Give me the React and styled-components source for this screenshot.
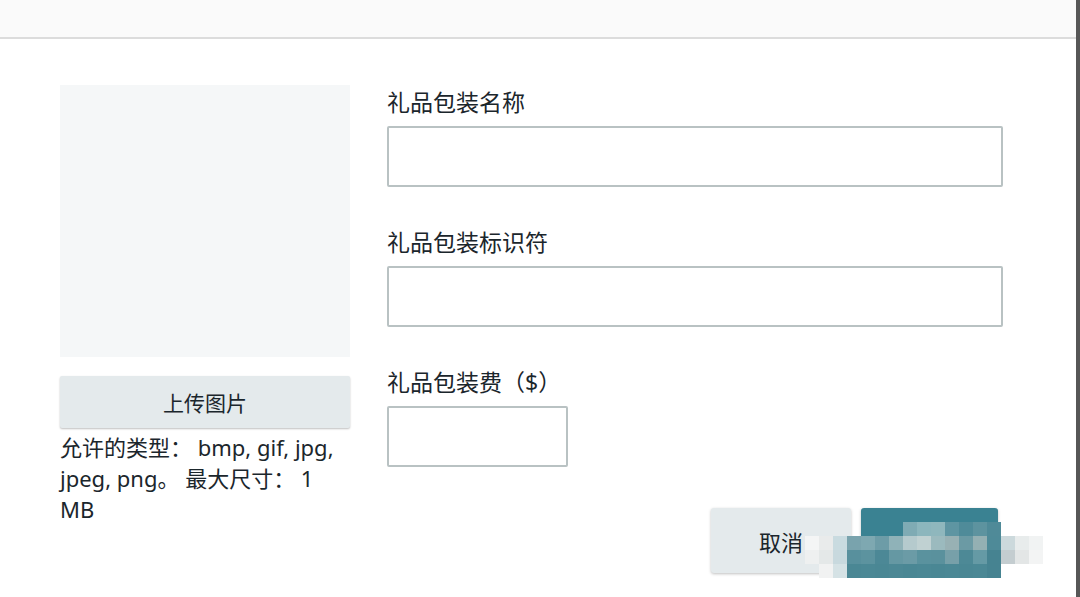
import React from "react";
import styled, { createGlobalStyle } from "styled-components";

const GlobalStyle = createGlobalStyle`
  html, body {
    margin: 0;
    padding: 0;
    background: #ffffff;
  }
  body {
    font-family: "Noto Sans", "Noto Sans CJK SC", sans-serif;
    color: #1b262c;
  }
`;

const mosaic = [
  { row: 0, cells: ["", "", "", "", "", "", "", "#7fabb4", "#8cb6bd", "#8fb7bd", "#5e95a2", "#4f8b99", "#5d939f", "#4f8a98", "", "", ""] },
  { row: 1, cells: ["#f4f5f5", "#e9ebeb", "#c9dbe0", "#79a3ad", "#7ea8b1", "#6d9ca7", "#8fb2b8", "#b5cacd", "#c0d1d2", "#9bbabe", "#98b1b4", "#6b9aa4", "#94b0b3", "#4e8a98", "#ccd9dc", "#e8ecec", "#f1f3f3"] },
  { row: 2, cells: ["#eef0f0", "#e4e8e8", "#c8d9de", "#58909d", "#5c939f", "#4c8896", "#6598a3", "#6b9ba6", "#5a929e", "#5a919d", "#77a0a9", "#4d8996", "#659aa5", "#468391", "#c4cdd0", "#e3e6e6", "#f3f4f4"] },
  { row: 3, cells: ["", "#f1f2f2", "#d5e2e5", "#4a8794", "#4b8895", "#4a8794", "#4c8895", "#4a8794", "#4b8895", "#4a8794", "#4b8895", "#4a8794", "#4b8895", "#468391", "", "", ""] },
];

function App() {
  return (
    <Page>
      <GlobalStyle />
      <Main>
        <Header />
        <Body>
          <ImageColumn>
            <ImagePlaceholder />
            <UploadButton type="button">上传图片</UploadButton>
            <HelpText>允许的类型： bmp, gif, jpg, jpeg, png。 最大尺寸： 1 MB</HelpText>
          </ImageColumn>

          <FormColumn>
            <Field>
              <Label>礼品包装名称</Label>
              <TextInput />
            </Field>
            <Field>
              <Label>礼品包装标识符</Label>
              <TextInput />
            </Field>
            <Field>
              <Label>礼品包装费（$）</Label>
              <TextInput $width="181px" />
            </Field>

            <Actions>
              <ActionButton type="button">取消</ActionButton>
              <ActionButton type="button" $primary>
                保存
              </ActionButton>
              <Mosaic>
                {mosaic.map((r) => (
                  <MosaicRow key={r.row}>
                    {r.cells.map((c, i) => (
                      <MosaicCell key={i} style={{ background: c || "transparent" }} />
                    ))}
                  </MosaicRow>
                ))}
              </Mosaic>
            </Actions>
          </FormColumn>
        </Body>
      </Main>
      <Edge />
    </Page>
  );
}

const Page = styled.div`
  display: flex;
  width: 1080px;
  height: 597px;
  overflow: hidden;
`;

const Main = styled.div`
  flex: 1;
  display: flex;
  flex-direction: column;
`;

const Edge = styled.div`
  width: 4px;
  background: #575757;
`;

const Header = styled.div`
  height: 37px;
  background: #fafafa;
  border-bottom: 2px solid #dcdcdc;
`;

const Body = styled.div`
  display: grid;
  grid-template-columns: 290px 616px;
  column-gap: 37px;
  padding: 46px 0 0 60px;
`;

const ImageColumn = styled.div`
  display: flex;
  flex-direction: column;
`;

const ImagePlaceholder = styled.div`
  height: 272px;
  background: #f5f7f8;
`;

const UploadButton = styled.button`
  margin-top: 19px;
  height: 52px;
  border: none;
  border-radius: 2px;
  background: #e4eaec;
  box-shadow: 0 1px 2px rgba(0, 0, 0, 0.25);
  font-family: "Noto Sans", "Noto Sans CJK SC", sans-serif;
  font-size: 21px;
  color: #1b262c;
  padding: 0;
`;

const HelpText = styled.p`
  margin: 4px 0 0;
  font-size: 22px;
  line-height: 31px;
  color: #1b262c;
`;

const FormColumn = styled.div`
  display: flex;
  flex-direction: column;
  gap: 40px;
  padding-top: 2px;
`;

const Field = styled.div`
  display: flex;
  flex-direction: column;
  gap: 9px;
`;

const Label = styled.label`
  font-size: 23px;
  line-height: 30px;
  color: #1b262c;
`;

const TextInput = styled.input`
  box-sizing: border-box;
  width: ${(p) => p.$width || "100%"};
  height: 61px;
  border: 2px solid #b9c2c3;
  border-radius: 2px;
  background: #ffffff;
  outline: none;
`;

const Actions = styled.div`
  position: relative;
  display: flex;
  justify-content: flex-end;
  gap: 10px;
  margin-top: 1px;
  padding-right: 5px;
`;

const ActionButton = styled.button`
  width: ${(p) => (p.$primary ? "137px" : "140px")};
  height: 65px;
  border: none;
  border-radius: 3px;
  background: ${(p) => (p.$primary ? "#3a8292" : "#e4eaec")};
  color: ${(p) => (p.$primary ? "#ffffff" : "#1b262c")};
  box-shadow: 0 1px 3px rgba(0, 0, 0, 0.25);
  font-family: "Noto Sans", "Noto Sans CJK SC", sans-serif;
  font-size: 22px;
  padding: 0;
`;

const Mosaic = styled.div`
  position: absolute;
  left: 418px;
  top: 14px;
  display: flex;
  flex-direction: column;
  pointer-events: none;
`;

const MosaicRow = styled.div`
  display: flex;
`;

const MosaicCell = styled.div`
  width: 14px;
  height: 14px;
`;

export default App;
